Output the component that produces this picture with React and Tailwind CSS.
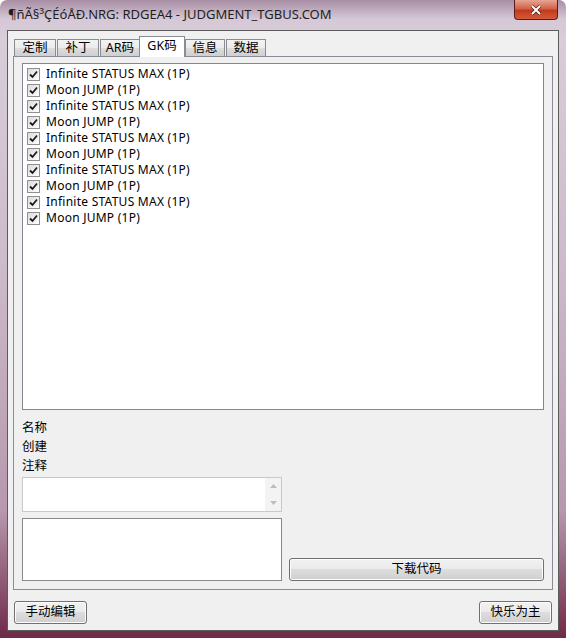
import React from "react"

const codes = [
  "Infinite STATUS MAX (1P)",
  "Moon JUMP (1P)",
  "Infinite STATUS MAX (1P)",
  "Moon JUMP (1P)",
  "Infinite STATUS MAX (1P)",
  "Moon JUMP (1P)",
  "Infinite STATUS MAX (1P)",
  "Moon JUMP (1P)",
  "Infinite STATUS MAX (1P)",
  "Moon JUMP (1P)",
]

const tabs = [
  { label: "定制", w: "w-[42px]" },
  { label: "补丁", w: "w-[42px]" },
  { label: "AR码", w: "w-[40px]" },
  { label: "GK码", w: "w-[46px]", active: true },
  { label: "信息", w: "w-[40px]" },
  { label: "数据", w: "w-[40px]" },
]

const Check = () => (
  <div className="w-[13px] h-[13px] border border-[#8e8f8f] bg-gradient-to-br from-[#dcdcdc] to-white flex items-center justify-center">
    <svg width="9" height="9" viewBox="0 0 9 9">
      <path d="M1 4.5 L3.5 7 L8 1.5" fill="none" stroke="#1a1a1a" strokeWidth="1.8" />
    </svg>
  </div>
)

const Button = ({ children, className }) => (
  <button
    className={`h-[23px] rounded-[3px] border border-[#707070] bg-[linear-gradient(#f2f2f2_0%,#ebebeb_45%,#dddddd_50%,#cfcfcf_100%)] text-[12.5px] text-black flex items-center justify-center shadow-[inset_0_0_0_1px_#fcfcfc] ${className}`}
  >
    {children}
  </button>
)

export default function App() {
  return (
    <div
      className="w-[566px] h-[638px] rounded-t-[7px] bg-[linear-gradient(180deg,#a88ea4_0%,#d6c8d6_3%,#d9cdd9_6%,#cdbccb_40%,#b798ae_80%,#6e2a48_100%)] flex flex-col overflow-hidden"
      style={{ fontFamily: '"Noto Sans", "Noto Sans CJK SC", sans-serif' }}
    >
      {/* title bar */}
      <div className="h-[30px] shrink-0 flex items-start justify-between pl-[8px] pr-[8px]">
        <div className="pt-[6px] text-[13px] text-[#1e1e1e] leading-[16px]">
          ¶ñÃ§³ÇÉóÅÐ.NRG: RDGEA4 - JUDGMENT_TGBUS.COM
        </div>
        <div className="w-[44px] h-[20px] rounded-b-[4px] border border-t-0 border-[#5a1d14] bg-[linear-gradient(#e8a593_0%,#d0634a_45%,#c23b1f_55%,#d45a3a_100%)] flex items-center justify-center">
          <svg width="12" height="10" viewBox="0 0 12 10">
            <path d="M2 1 L10 9 M10 1 L2 9" stroke="#3a1a14" strokeWidth="3.2" />
            <path d="M2 1 L10 9 M10 1 L2 9" stroke="white" strokeWidth="2" />
          </svg>
        </div>
      </div>

      {/* client area */}
      <div className="mx-[7px] h-[601px] shrink-0 border border-[#5c5c5c] bg-[#f0f0f0] flex flex-col">
        <div className="pl-[5px] pr-[5px] pt-[5px]">
          {/* tab header */}
          <div className="flex items-end h-[20px] pl-[1px]">
            {tabs.map((t) =>
              t.active ? (
                <div
                  key={t.label}
                  className={`${t.w} h-[21px] -mb-[1px] mx-[-1px] relative z-10 bg-white border border-b-0 border-[#898c95] flex items-start justify-center pt-[1px] text-[12.5px] leading-[16px]`}
                >
                  {t.label}
                </div>
              ) : (
                <div
                  key={t.label}
                  className={`${t.w} h-[17px] bg-[linear-gradient(#f3f3f3_0%,#ebebeb_50%,#dddddd_51%,#cfcfcf_100%)] border border-b-0 border-[#898c95] flex items-center justify-center text-[12.5px] leading-[16px] ml-[1px] first:ml-0`}
                >
                  {t.label}
                </div>
              )
            )}
          </div>

          {/* tab panel */}
          <div className="h-[534px] border border-[#898c95] bg-[#f0f0f0] px-[8px] pt-[6px] pb-[8px] flex flex-col">
            <div className="h-[347px] shrink-0 bg-white border border-[#828790] pt-[2px] pl-[4px]">
              {codes.map((c, i) => (
                <div key={i} className="h-[16px] flex items-center gap-[6px]">
                  <Check />
                  <span className="text-[12px] tracking-[0.25px] text-black leading-[16px]">{c}</span>
                </div>
              ))}
            </div>

            <div className="flex flex-col text-[12.5px] leading-[19px] text-black mt-[8px]">
              <span>名称</span>
              <span>创建</span>
              <span>注释</span>
            </div>

            <div className="flex gap-[7px] mt-[2px]">
              <div className="flex flex-col gap-[6px] w-[261px]">
                <div className="h-[35px] border border-[#c8c8c8] bg-white flex justify-end">
                  <div className="w-[16px] bg-[#f3f3f3] flex flex-col items-center justify-between py-[6px]">
                    <svg width="7" height="4" viewBox="0 0 7 4">
                      <path d="M0 4 L3.5 0 L7 4 Z" fill="#bcbcbc" />
                    </svg>
                    <svg width="7" height="4" viewBox="0 0 7 4">
                      <path d="M0 0 L3.5 4 L7 0 Z" fill="#bcbcbc" />
                    </svg>
                  </div>
                </div>
                <div className="h-[63px] border border-[#8a8a8a] bg-white" />
              </div>
              <div className="flex-1 flex items-end">
                <Button className="w-[255px]">下载代码</Button>
              </div>
            </div>
          </div>
        </div>

        <div className="flex justify-between px-[6px] mt-[11px]">
          <Button className="w-[73px]">手动编辑</Button>
          <Button className="w-[73px]">快乐为主</Button>
        </div>
      </div>
    </div>
  )
}
